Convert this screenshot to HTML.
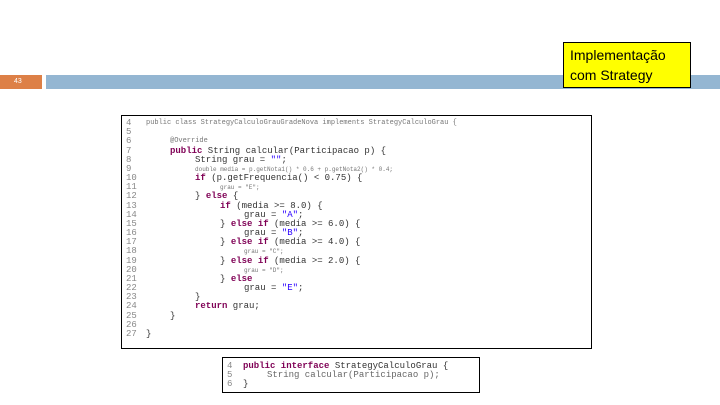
<!DOCTYPE html>
<html><head><style>
body{margin:0;width:720px;height:405px;background:#fff;position:relative;overflow:hidden;font-family:"Liberation Sans",sans-serif}
.o{position:absolute;left:0;top:75px;width:42px;height:14px;background:#dd8047;color:#fff;font-size:7px;line-height:14px;padding-left:14px;box-sizing:border-box}
.b{position:absolute;left:46px;top:75px;width:674px;height:14px;background:#94b6d2}
.y{position:absolute;left:563px;top:42px;width:128px;height:46px;background:#ff0;border:1px solid #000;font-size:14px;line-height:20px;padding:2px 6px;box-sizing:border-box;color:#000}
.c{position:absolute;border:1px solid #000;background:#fff;font-family:"Liberation Mono",monospace;font-size:9px;color:#333}
.l{position:absolute;left:0;white-space:pre;height:9px;line-height:9px}
.n{position:absolute;left:4px;color:#888}
.k{color:#7f0055;font-weight:bold}
.s{color:#2a00ff}
</style></head><body>
<div class="o">43</div><div class="b"></div>
<div class="y">Implementação<br>com Strategy</div>
<div class="c" style="left:121px;top:115px;width:469px;height:232px">
<div class="l" style="top:3px"><span class="n">4</span><span style="position:absolute;left:24px;font-size:7px;color:#777">public class StrategyCalculoGrauGradeNova implements StrategyCalculoGrau {</span></div>
<div class="l" style="top:12px"><span class="n">5</span></div>
<div class="l" style="top:21px"><span class="n">6</span><span style="position:absolute;left:48px;font-size:7px;color:#777">@Override</span></div>
<div class="l" style="top:31px"><span class="n">7</span><span style="position:absolute;left:48px"><span class="k">public</span> String calcular(Participacao p) {</span></div>
<div class="l" style="top:40px"><span class="n">8</span><span style="position:absolute;left:73px">String grau = <span class="s">""</span>;</span></div>
<div class="l" style="top:49px"><span class="n">9</span><span style="position:absolute;left:73px;font-size:6px;color:#777">double media = p.getNota1() * 0.6 + p.getNota2() * 0.4;</span></div>
<div class="l" style="top:58px"><span class="n">10</span><span style="position:absolute;left:73px"><span class="k">if</span> (p.getFrequencia() &lt; 0.75) {</span></div>
<div class="l" style="top:67px"><span class="n">11</span><span style="position:absolute;left:98px;font-size:6px;color:#777">grau = "E";</span></div>
<div class="l" style="top:76px"><span class="n">12</span><span style="position:absolute;left:73px">} <span class="k">else</span> {</span></div>
<div class="l" style="top:86px"><span class="n">13</span><span style="position:absolute;left:98px"><span class="k">if</span> (media &gt;= 8.0) {</span></div>
<div class="l" style="top:95px"><span class="n">14</span><span style="position:absolute;left:122px">grau = <span class="s">"A"</span>;</span></div>
<div class="l" style="top:104px"><span class="n">15</span><span style="position:absolute;left:98px">} <span class="k">else if</span> (media &gt;= 6.0) {</span></div>
<div class="l" style="top:113px"><span class="n">16</span><span style="position:absolute;left:122px">grau = <span class="s">"B"</span>;</span></div>
<div class="l" style="top:122px"><span class="n">17</span><span style="position:absolute;left:98px">} <span class="k">else if</span> (media &gt;= 4.0) {</span></div>
<div class="l" style="top:131px"><span class="n">18</span><span style="position:absolute;left:122px;font-size:6px;color:#777">grau = "C";</span></div>
<div class="l" style="top:141px"><span class="n">19</span><span style="position:absolute;left:98px">} <span class="k">else if</span> (media &gt;= 2.0) {</span></div>
<div class="l" style="top:150px"><span class="n">20</span><span style="position:absolute;left:122px;font-size:6px;color:#777">grau = "D";</span></div>
<div class="l" style="top:159px"><span class="n">21</span><span style="position:absolute;left:98px">} <span class="k">else</span></span></div>
<div class="l" style="top:168px"><span class="n">22</span><span style="position:absolute;left:122px">grau = <span class="s">"E"</span>;</span></div>
<div class="l" style="top:177px"><span class="n">23</span><span style="position:absolute;left:73px">}</span></div>
<div class="l" style="top:186px"><span class="n">24</span><span style="position:absolute;left:73px"><span class="k">return</span> grau;</span></div>
<div class="l" style="top:196px"><span class="n">25</span><span style="position:absolute;left:48px">}</span></div>
<div class="l" style="top:205px"><span class="n">26</span></div>
<div class="l" style="top:214px"><span class="n">27</span><span style="position:absolute;left:24px">}</span></div>
</div>
<div class="c" style="left:222px;top:357px;width:256px;height:34px">
<div class="l" style="top:4px"><span class="n">4</span><span style="position:absolute;left:20px"><span class="k">public interface</span> StrategyCalculoGrau {</span></div>
<div class="l" style="top:13px"><span class="n">5</span><span style="position:absolute;left:44px;color:#666">String calcular(Participacao p);</span></div>
<div class="l" style="top:22px"><span class="n">6</span><span style="position:absolute;left:20px">}</span></div>
</div>
</body></html>
